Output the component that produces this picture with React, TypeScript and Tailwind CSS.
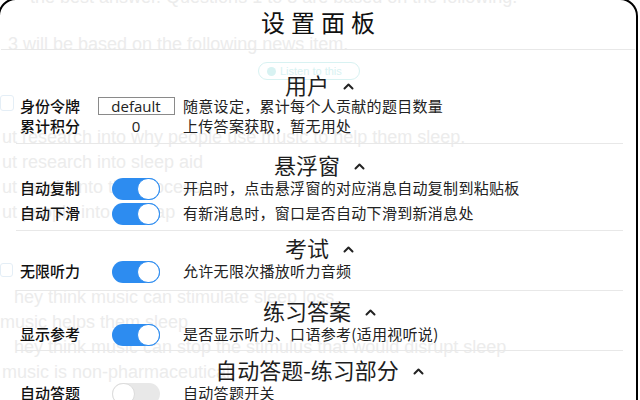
import React from "react";

const CJK = "font-['Microsoft_YaHei','Noto_Sans_CJK_SC',sans-serif]";

function Chevron() {
  return (
    <svg width="11" height="8" viewBox="0 0 11 8" className="mt-[4px] ml-[14px]">
      <path d="M1.5 6.5 L5.5 2.5 L9.5 6.5" fill="none" stroke="#222" strokeWidth="2" strokeLinecap="round" strokeLinejoin="round" />
    </svg>
  );
}

function Header({ title }: { title: string }) {
  return (
    <div className="h-[24px] flex items-center justify-center">
      <span className="text-[22px] leading-[24px] text-[#1e1e1e]">{title}</span>
      <Chevron />
    </div>
  );
}

function Toggle({ on }: { on: boolean }) {
  return on ? (
    <div className="w-[48px] h-[22px] rounded-full bg-[#2d8cf0] flex justify-end">
      <div className="w-[23px] h-[22px] rounded-full bg-white border border-[#2d8cf0]" />
    </div>
  ) : (
    <div className="w-[48px] h-[22px] rounded-full bg-[#e8e8e8] flex justify-start">
      <div className="w-[23px] h-[22px] rounded-full bg-white border border-[#dcdcdc]" />
    </div>
  );
}

function Row({ label, control, desc, h }: { label: string; control: React.ReactNode; desc: string; h: string }) {
  return (
    <div className={`flex items-center pl-[4px] ${h}`}>
      <div className="w-[77px] text-[15px] font-medium text-[#111]">{label}</div>
      <div className="w-[78px] flex justify-center">{control}</div>
      <div className="ml-[8px] text-[15px] tracking-[0.3px] text-[#222]">{desc}</div>
    </div>
  );
}

const bgLines: { h: string; cls?: string; text: React.ReactNode }[] = [
  { h: "h-[6px]", cls: "items-end", text: <span className="pl-[30px] leading-[18px]">the best answer. Questions 1 to 3 are based on the following.</span> },
  { h: "h-[28px]", text: "" },
  { h: "h-[20px]", text: <span className="pl-[8px]">3 will be based on the following news item.</span> },
  { h: "h-[8px]", text: "" },
  {
    h: "h-[18px]",
    text: (
      <div className="ml-[258px] w-[102px] h-[18px] rounded-full border border-[#d8f2f2] text-[11px] flex items-center gap-[4px] pl-[8px] text-[#d8f2f2]">
        <span className="w-[9px] h-[9px] rounded-full bg-[#d8f2f2]" />
        <span>Listen to this</span>
      </div>
    ),
  },
  { h: "h-[15px]", text: "" },
  { h: "h-[16px]", text: <div className="w-[14px] h-[16px] border border-[#e4eef6] rounded-[3px]" /> },
  { h: "h-[16px]", text: "" },
  { h: "h-[20px]", text: <span className="pl-[2px]">ut research into why people use music to help them sleep.</span> },
  { h: "h-[3px]", text: "" },
  { h: "h-[25px]", text: <span className="pl-[2px]">ut research into sleep aid</span> },
  { h: "h-[25px]", text: <span className="pl-[2px]">ut music into the process.</span> },
  { h: "h-[25px]", text: <span className="pl-[2px]">ut people into the gap</span> },
  { h: "h-[37px]", text: "" },
  { h: "h-[16px]", text: <div className="w-[13px] h-[14px] border border-[#e4eef6] rounded-[3px]" /> },
  { h: "h-[7px]", text: "" },
  { h: "h-[25px]", text: <span className="pl-[14px]">hey think music can stimulate sleep loss.</span> },
  { h: "h-[25px]", text: <span>music helps them sleep</span> },
  { h: "h-[25px]", text: <span className="pl-[14px]">hey think music can stop the stimulus that would disrupt sleep</span> },
  { h: "h-[25px]", text: <span className="pl-[2px]">music is non-pharmaceutical.</span> },
];

export default function App() {
  return (
    <div className="relative w-[640px] h-[400px] overflow-hidden bg-white">
      <div className="flex flex-col text-[18px] text-[#ececec] font-['Liberation_Sans',Arial,sans-serif] whitespace-nowrap">
        {bgLines.map((l, i) => (
          <div key={i} className={`${l.h} flex ${l.cls ?? "items-center"}`}>
            {l.text}
          </div>
        ))}
      </div>

      <div className={`absolute left-[-2px] top-[-2px] w-[640px] h-[430px] border-2 border-black rounded-t-[18px] bg-transparent ${CJK}`}>
        <div className="h-[50px] border-b border-[#e8e8e8] flex items-center justify-center mx-[1px]">
          <span className="text-[24px] tracking-[6px] pl-[6px] mt-[-6px] text-[#111]">设置面板</span>
        </div>
        <div className="pl-[16px] pr-[13px]">
          <div className="pt-[22px] pb-[7px] border-b border-[#e8e8e8]">
            <Header title="用户" />
            <Row
              h="h-[20px]"
              label="身份令牌"
              control={
                <div className="w-[77px] h-[18px] border border-[#8a8a8a] bg-white flex items-center justify-center text-[15px] text-[#222] font-['Open_Sans',sans-serif] leading-none">
                  default
                </div>
              }
              desc="随意设定，累计每个人贡献的题目数量"
            />
            <Row
              h="h-[20px]"
              label="累计积分"
              control={<span className="text-[15px] text-[#222] font-['Open_Sans',sans-serif]">0</span>}
              desc="上传答案获取，暂无用处"
            />
          </div>
          <div className="pt-[8px] pb-[4px] border-b border-[#e8e8e8]">
            <Header title="悬浮窗" />
            <Row h="h-[25px]" label="自动复制" control={<Toggle on />} desc="开启时，点击悬浮窗的对应消息自动复制到粘贴板" />
            <Row h="h-[25px]" label="自动下滑" control={<Toggle on />} desc="有新消息时，窗口是否自动下滑到新消息处" />
          </div>
          <div className="pt-[4px] pb-[6px] border-b border-[#e8e8e8]">
            <Header title="考试" />
            <Row h="h-[25px]" label="无限听力" control={<Toggle on />} desc="允许无限次播放听力音频" />
          </div>
          <div className="pt-[7px] pb-[3px] border-b border-[#e8e8e8]">
            <Header title="练习答案" />
            <Row h="h-[25px]" label="显示参考" control={<Toggle on />} desc="是否显示听力、口语参考(适用视听说)" />
          </div>
          <div className="pt-[6px]">
            <Header title="自动答题-练习部分" />
            <Row h="h-[25px]" label="自动答题" control={<Toggle on={false} />} desc="自动答题开关" />
          </div>
        </div>
      </div>
    </div>
  );
}
